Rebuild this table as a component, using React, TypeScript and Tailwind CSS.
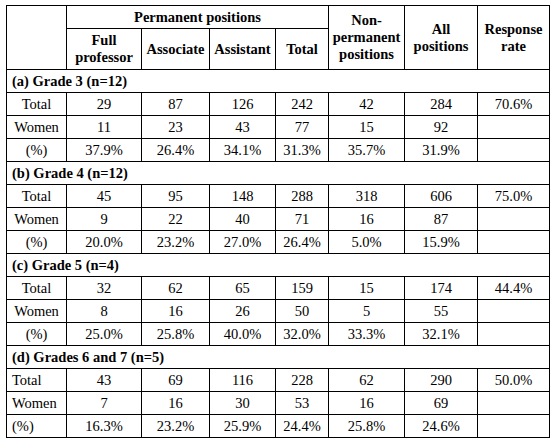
import React from 'react'

type Group = {
  title: string
  leftLabels?: boolean
  rows: { label: string; values: string[]; rate?: string }[]
}

const groups: Group[] = [
  {
    title: '(a) Grade 3 (n=12)',
    rows: [
      { label: 'Total', values: ['29', '87', '126', '242', '42', '284'], rate: '70.6%' },
      { label: 'Women', values: ['11', '23', '43', '77', '15', '92'] },
      { label: '(%)', values: ['37.9%', '26.4%', '34.1%', '31.3%', '35.7%', '31.9%'] },
    ],
  },
  {
    title: '(b) Grade 4 (n=12)',
    rows: [
      { label: 'Total', values: ['45', '95', '148', '288', '318', '606'], rate: '75.0%' },
      { label: 'Women', values: ['9', '22', '40', '71', '16', '87'] },
      { label: '(%)', values: ['20.0%', '23.2%', '27.0%', '26.4%', '5.0%', '15.9%'] },
    ],
  },
  {
    title: '(c) Grade 5 (n=4)',
    rows: [
      { label: 'Total', values: ['32', '62', '65', '159', '15', '174'], rate: '44.4%' },
      { label: 'Women', values: ['8', '16', '26', '50', '5', '55'] },
      { label: '(%)', values: ['25.0%', '25.8%', '40.0%', '32.0%', '33.3%', '32.1%'] },
    ],
  },
  {
    title: '(d) Grades 6 and 7 (n=5)',
    leftLabels: true,
    rows: [
      { label: 'Total', values: ['43', '69', '116', '228', '62', '290'], rate: '50.0%' },
      { label: 'Women', values: ['7', '16', '30', '53', '16', '69'] },
      { label: '(%)', values: ['16.3%', '23.2%', '25.9%', '24.4%', '25.8%', '24.6%'] },
    ],
  },
]

const cell = 'border border-black p-0 text-center align-middle'
const leftCell = 'border border-black py-0 pl-[5px] text-left align-middle'

export default function App() {
  return (
    <div className="min-h-[443px] bg-white pl-[6px] pt-[5px] font-['Liberation_Serif','Times_New_Roman',serif] text-[14.5px] leading-[17px] text-black">
      <table className="table-fixed border-collapse w-[543px]">
        <colgroup>
          <col className="w-[60px]" />
          <col className="w-[75px]" />
          <col className="w-[68px]" />
          <col className="w-[66px]" />
          <col className="w-[53px]" />
          <col className="w-[76px]" />
          <col className="w-[73px]" />
          <col className="w-[72px]" />
        </colgroup>
        <thead className="font-bold">
          <tr className="h-[23px]">
            <th rowSpan={2} className={cell}></th>
            <th colSpan={4} className={cell}>Permanent positions</th>
            <th rowSpan={2} className={cell}>
              Non-
              <br />
              permanent
              <br />
              positions
            </th>
            <th rowSpan={2} className={cell}>
              All
              <br />
              positions
            </th>
            <th rowSpan={2} className={cell}>
              Response
              <br />
              rate
            </th>
          </tr>
          <tr className="h-[41px]">
            <th className={cell}>
              Full
              <br />
              professor
            </th>
            <th className={cell}>Associate</th>
            <th className={cell}>Assistant</th>
            <th className={cell}>Total</th>
          </tr>
        </thead>
        <tbody>
          {groups.map((g) => (
            <React.Fragment key={g.title}>
              <tr className="h-[23px]">
                <td colSpan={8} className={`${leftCell} font-bold`}>
                  {g.title}
                </td>
              </tr>
              {g.rows.map((r) => (
                <tr key={r.label} className="h-[23px]">
                  <td className={g.leftLabels ? leftCell : cell}>{r.label}</td>
                  {r.values.map((v, i) => (
                    <td key={i} className={cell}>{v}</td>
                  ))}
                  <td className={cell}>{r.rate ?? ''}</td>
                </tr>
              ))}
            </React.Fragment>
          ))}
        </tbody>
      </table>
    </div>
  )
}
